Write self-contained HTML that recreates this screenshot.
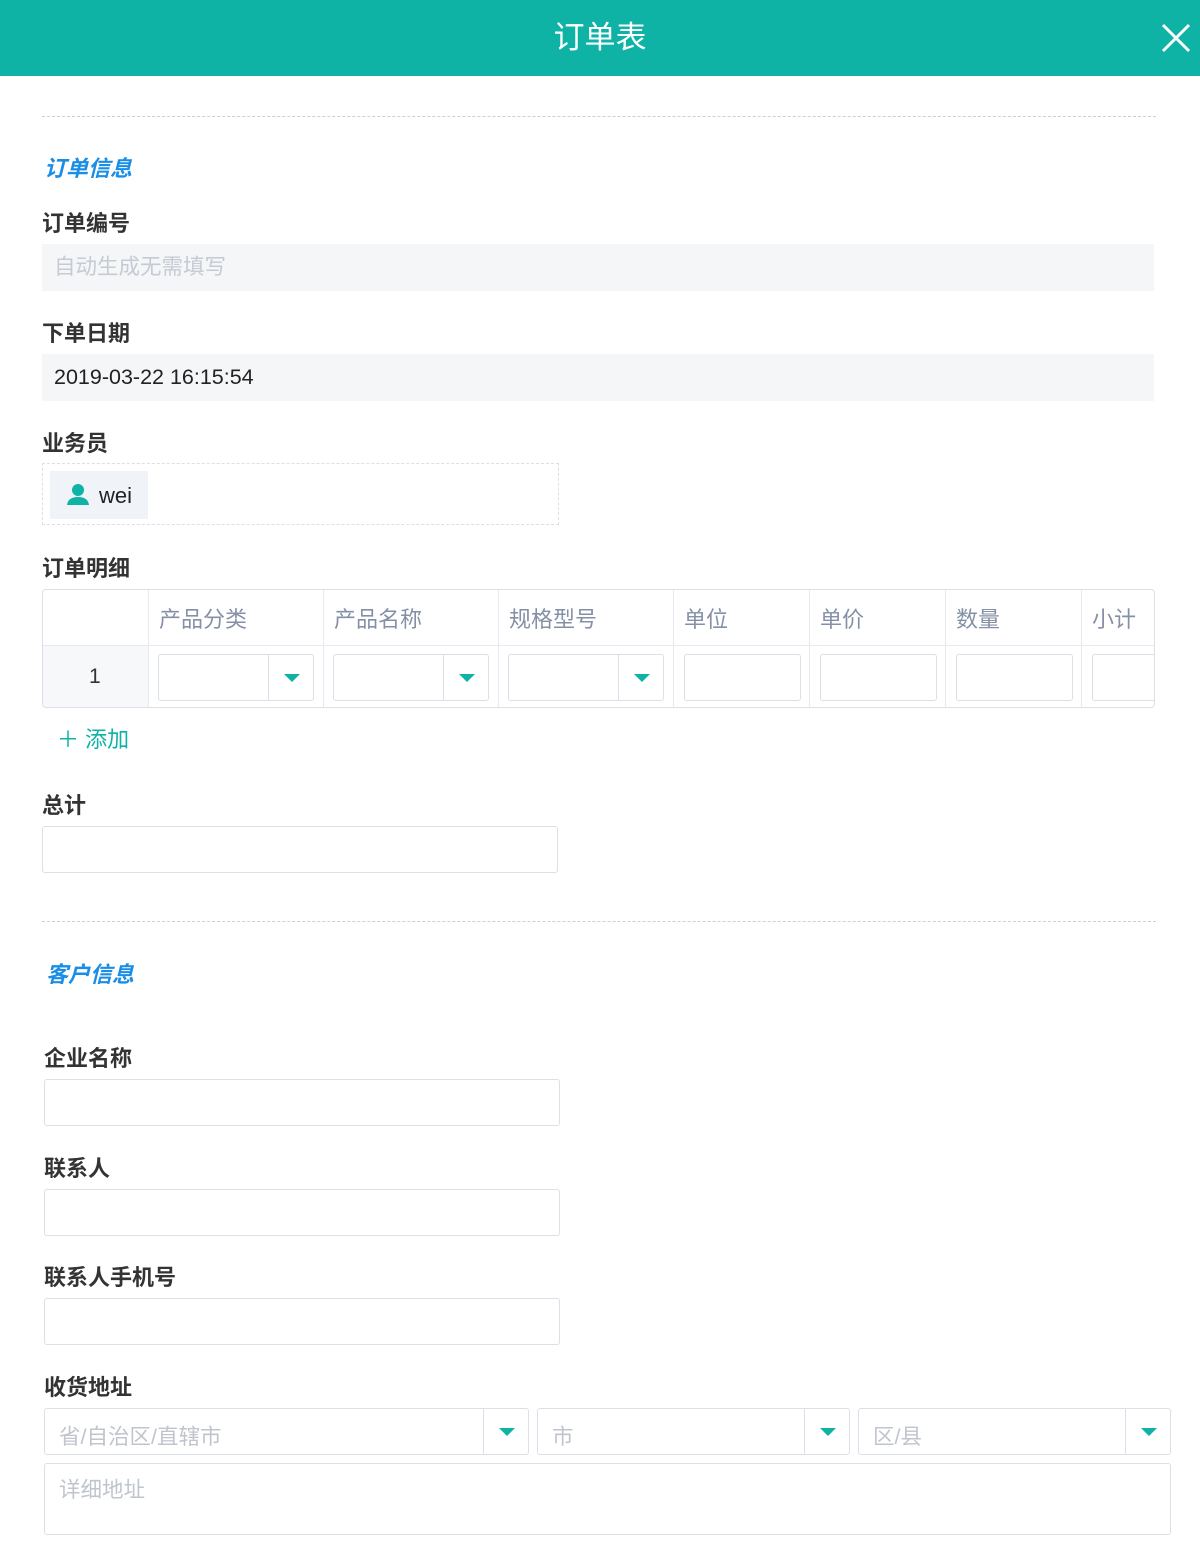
<!DOCTYPE html>
<html><head><meta charset="utf-8"><style>
*{box-sizing:border-box;margin:0;padding:0}
body{width:1200px;height:1547px;background:#fff;font-family:"Liberation Sans","Noto Sans CJK SC",sans-serif;position:relative;overflow:hidden;color:#333}
.a{position:absolute}
.hdr{left:0;top:0;width:1200px;height:76px;background:#0fb3a6;color:#fff;font-size:31px;text-align:center;line-height:76px}
.dash{height:0;border-top:1.5px dashed #c8d0dc}
.sec{color:#1a8ee6;font-style:italic;font-weight:bold;font-size:22px}
.lbl{font-size:22px;font-weight:bold;color:#333}
.box{border:1px solid #dcdfe6;border-radius:3px;background:#fff}
.ro{background:#f5f6f8;font-size:21.5px;line-height:46px;padding-left:12px}
.ph{color:#c0c4cc;font-size:21.5px}
.tri{width:0;height:0;border-left:8px solid transparent;border-right:8px solid transparent;border-top:8px solid #0fb3a6}
.th{color:#8590a6;font-size:22px}
</style></head><body>
<div class="a hdr">订单表</div>
<svg class="a" style="left:1160px;top:22px" width="32" height="32"><path d="M3 3L29 29M29 3L3 29" stroke="#fff" stroke-width="3"/></svg>

<div class="a dash" style="left:42px;top:116px;width:1114px"></div>
<div class="a sec" style="left:44px;top:151px">订单信息</div>
<div class="a lbl" style="left:42px;top:206px">订单编号</div>
<div class="a ro ph" style="left:42px;top:244px;width:1112px;height:47px;color:#c6cad3">自动生成无需填写</div>
<div class="a lbl" style="left:42px;top:316px">下单日期</div>
<div class="a ro" style="left:42px;top:354px;width:1112px;height:47px;color:#222">2019-03-22 16:15:54</div>
<div class="a lbl" style="left:42px;top:426px">业务员</div>
<div class="a" style="left:42px;top:463px;width:517px;height:62px;border:1.5px dashed #dcdfe6"></div>
<div class="a" style="left:50px;top:471px;width:98px;height:48px;background:#f0f4f9"></div>
<svg class="a" style="left:66px;top:483px" width="24" height="24"><circle cx="12" cy="7" r="6" fill="#0fb3a6"/><path d="M1 22Q2 14 12 14Q22 14 23 22Z" fill="#0fb3a6"/></svg>
<div class="a" style="left:99px;top:483px;font-size:22px;color:#222">wei</div>

<div class="a lbl" style="left:42px;top:551px">订单明细</div>
<div class="a" style="left:42px;top:589px;width:1113px;height:119px;border:1.5px solid #dcdfe6;border-radius:4px;overflow:hidden">
 <div class="a" style="left:0;top:56px;width:106px;height:62px;background:#f7f8fa"></div>
 <div class="a" style="left:0;top:55px;width:1113px;height:1px;background:#e6e9ee"></div>
 <div class="a" style="left:46px;top:75px;font-size:21px">1</div>
 <div class="a" style="left:105px;top:0;width:1px;height:119px;background:#e6e9ee"></div>
 <div class="a" style="left:280px;top:0;width:1px;height:119px;background:#e6e9ee"></div>
 <div class="a" style="left:455px;top:0;width:1px;height:119px;background:#e6e9ee"></div>
 <div class="a" style="left:630px;top:0;width:1px;height:119px;background:#e6e9ee"></div>
 <div class="a" style="left:766px;top:0;width:1px;height:119px;background:#e6e9ee"></div>
 <div class="a" style="left:902px;top:0;width:1px;height:119px;background:#e6e9ee"></div>
 <div class="a" style="left:1038px;top:0;width:1px;height:119px;background:#e6e9ee"></div>
 <div class="a th" style="left:116px;top:12px">产品分类</div>
 <div class="a th" style="left:291px;top:12px">产品名称</div>
 <div class="a th" style="left:466px;top:12px">规格型号</div>
 <div class="a th" style="left:641px;top:12px">单位</div>
 <div class="a th" style="left:777px;top:12px">单价</div>
 <div class="a th" style="left:913px;top:12px">数量</div>
 <div class="a th" style="left:1049px;top:12px">小计</div>
 <div class="a box" style="left:115px;top:64px;width:156px;height:47px"><div class="a" style="left:109px;top:0;width:1px;height:45px;background:#dcdfe6"></div><div class="a tri" style="left:125px;top:19px"></div></div>
 <div class="a box" style="left:290px;top:64px;width:156px;height:47px"><div class="a" style="left:109px;top:0;width:1px;height:45px;background:#dcdfe6"></div><div class="a tri" style="left:125px;top:19px"></div></div>
 <div class="a box" style="left:465px;top:64px;width:156px;height:47px"><div class="a" style="left:109px;top:0;width:1px;height:45px;background:#dcdfe6"></div><div class="a tri" style="left:125px;top:19px"></div></div>
 <div class="a box" style="left:641px;top:64px;width:117px;height:47px"></div>
 <div class="a box" style="left:777px;top:64px;width:117px;height:47px"></div>
 <div class="a box" style="left:913px;top:64px;width:117px;height:47px"></div>
 <div class="a box" style="left:1049px;top:64px;width:117px;height:47px"></div>
</div>
<div class="a" style="left:57px;top:722px;font-size:22px;color:#0fb3a6">＋ 添加</div>

<div class="a lbl" style="left:42px;top:788px">总计</div>
<div class="a box" style="left:42px;top:826px;width:516px;height:47px"></div>

<div class="a dash" style="left:42px;top:921px;width:1114px"></div>
<div class="a sec" style="left:46px;top:957px">客户信息</div>
<div class="a lbl" style="left:44px;top:1041px">企业名称</div>
<div class="a box" style="left:44px;top:1079px;width:516px;height:47px"></div>
<div class="a lbl" style="left:44px;top:1151px">联系人</div>
<div class="a box" style="left:44px;top:1189px;width:516px;height:47px"></div>
<div class="a lbl" style="left:44px;top:1260px">联系人手机号</div>
<div class="a box" style="left:44px;top:1298px;width:516px;height:47px"></div>
<div class="a lbl" style="left:44px;top:1370px">收货地址</div>
<div class="a box" style="left:44px;top:1408px;width:485px;height:47px"><div class="a ph" style="left:14px;top:11px">省/自治区/直辖市</div><div class="a" style="left:438px;top:0;width:1px;height:45px;background:#dcdfe6"></div><div class="a tri" style="left:454px;top:19px"></div></div>
<div class="a box" style="left:537px;top:1408px;width:313px;height:47px"><div class="a ph" style="left:14px;top:11px">市</div><div class="a" style="left:266px;top:0;width:1px;height:45px;background:#dcdfe6"></div><div class="a tri" style="left:282px;top:19px"></div></div>
<div class="a box" style="left:858px;top:1408px;width:313px;height:47px"><div class="a ph" style="left:14px;top:11px">区/县</div><div class="a" style="left:266px;top:0;width:1px;height:45px;background:#dcdfe6"></div><div class="a tri" style="left:282px;top:19px"></div></div>
<div class="a box" style="left:44px;top:1463px;width:1127px;height:72px"><div class="a ph" style="left:14px;top:9px">详细地址</div></div>
</body></html>
